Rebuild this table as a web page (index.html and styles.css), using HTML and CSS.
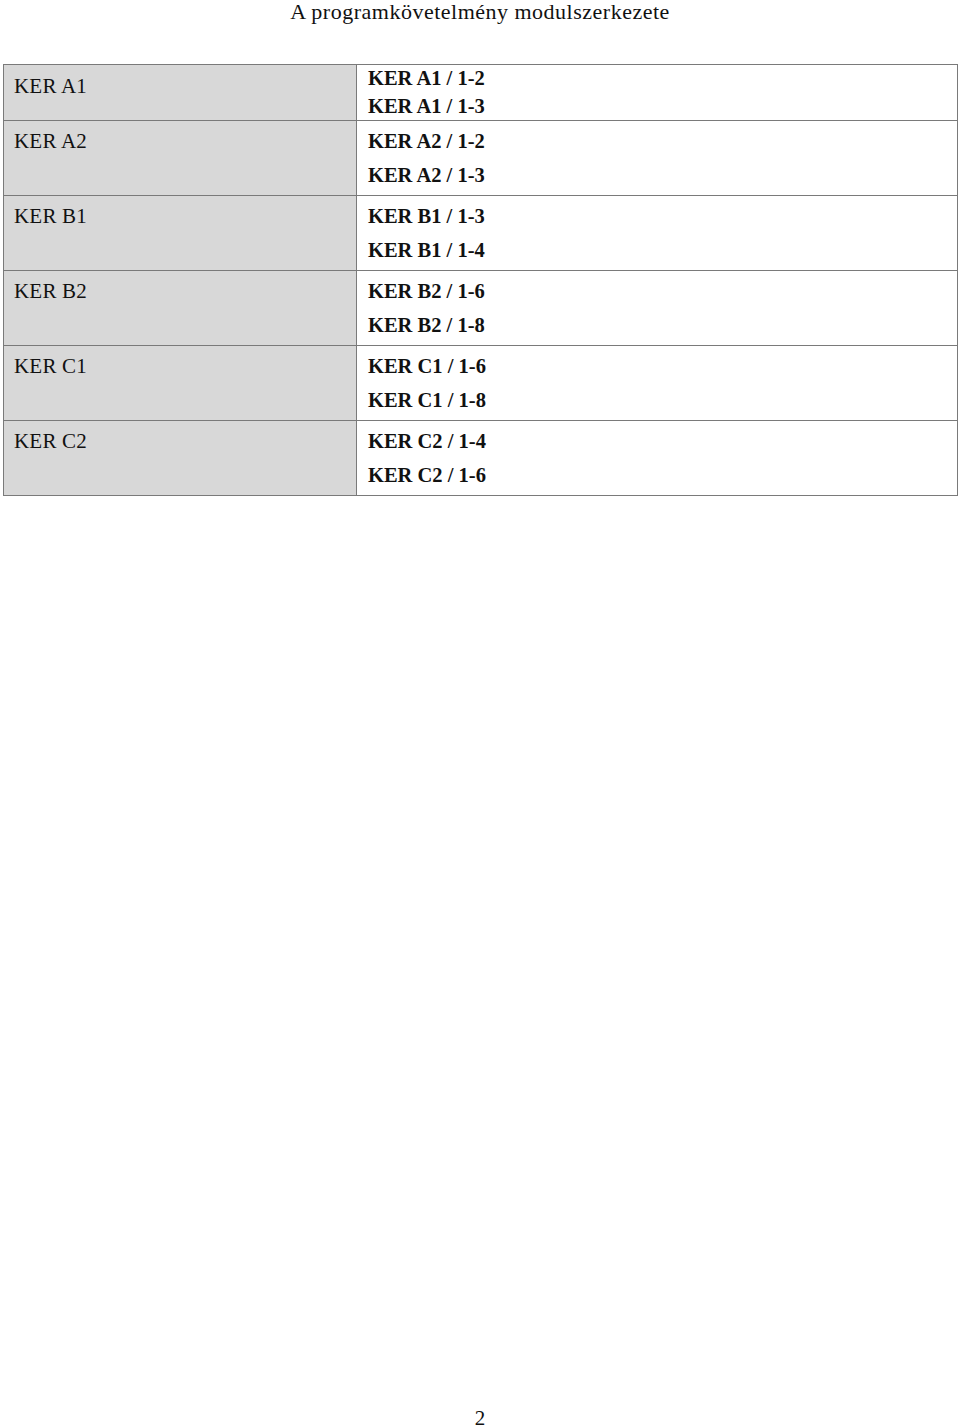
FILE: index.html
```html
<!DOCTYPE html>
<html lang="hu">
<head>
<meta charset="utf-8">
<title>A programkövetelmény modulszerkezete</title>
<link rel="stylesheet" href="styles.css">
</head>
<body>
<div class="page">
  <h1 class="title">A programkövetelmény modulszerkezete</h1>
  <table class="modules">
    <tr class="first">
      <td class="name">KER A1</td>
      <td class="items"><div>KER A1 / 1-2</div><div>KER A1 / 1-3</div></td>
    </tr>
    <tr>
      <td class="name">KER A2</td>
      <td class="items"><div>KER A2 / 1-2</div><div>KER A2 / 1-3</div></td>
    </tr>
    <tr>
      <td class="name">KER B1</td>
      <td class="items"><div>KER B1 / 1-3</div><div>KER B1 / 1-4</div></td>
    </tr>
    <tr>
      <td class="name">KER B2</td>
      <td class="items"><div>KER B2 / 1-6</div><div>KER B2 / 1-8</div></td>
    </tr>
    <tr>
      <td class="name">KER C1</td>
      <td class="items"><div>KER C1 / 1-6</div><div>KER C1 / 1-8</div></td>
    </tr>
    <tr>
      <td class="name">KER C2</td>
      <td class="items"><div>KER C2 / 1-4</div><div>KER C2 / 1-6</div></td>
    </tr>
  </table>
  <div class="spacer"></div>
  <div class="pagenum">2</div>
</div>
</body>
</html>
```
FILE: styles.css
```css
html, body {
  margin: 0;
  padding: 0;
  background: #ffffff;
}
body {
  font-family: "Liberation Serif", "DejaVu Serif", serif;
  color: #111111;
}
.page {
  width: 960px;
  height: 1428px;
  display: flex;
  flex-direction: column;
}
.title {
  margin: 0;
  font-size: 22px;
  font-weight: normal;
  line-height: 24px;
  letter-spacing: 0.5px;
  text-align: center;
}
.modules {
  margin: 40px 0 0 3px;
  width: 955px;
  border-collapse: collapse;
  font-size: 21px;
}
.modules td {
  border: 1px solid #7a7a7a;
  vertical-align: top;
  padding: 3px 0 3px;
  line-height: 34px;
}
.modules td.name {
  width: 342px;
  background: #d8d8d8;
  padding-left: 10px;
  letter-spacing: 0.2px;
}
.modules td.items {
  font-weight: bold;
  padding-left: 11px;
  font-size: 20.5px;
}
.modules tr.first td.items {
  padding: 0 0 0 11px;
  line-height: 27.5px;
}
.modules tr.first td.name {
  padding-top: 4px;
  padding-bottom: 0;
}
.spacer {
  flex: 1;
}
.pagenum {
  text-align: center;
  font-size: 21px;
  line-height: 20px;
}
```
